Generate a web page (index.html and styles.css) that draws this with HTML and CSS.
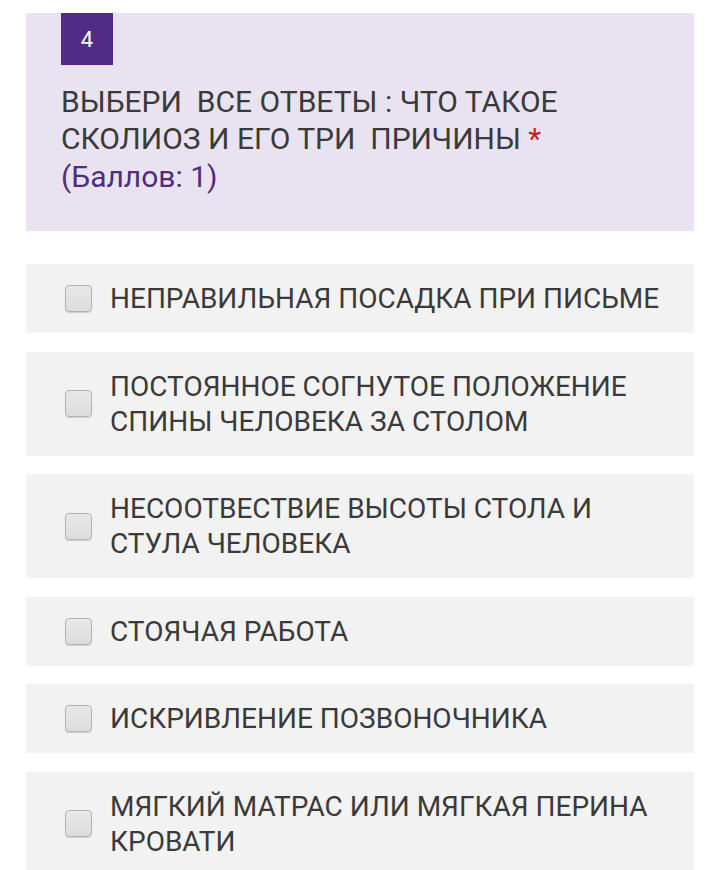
FILE: index.html
```html
<!DOCTYPE html>
<html lang="ru">
<head>
<meta charset="utf-8">
<link rel="stylesheet" href="styles.css">
</head>
<body>
<div class="page">
  <div class="question">
    <div class="badge">4</div>
    <div class="title">ВЫБЕРИ&nbsp; ВСЕ ОТВЕТЫ : ЧТО ТАКОЕ СКОЛИОЗ И ЕГО ТРИ&nbsp; ПРИЧИНЫ <span class="req">*</span></div>
    <div class="points">(Баллов: 1)</div>
  </div>
  <div class="options">
    <label class="option"><span class="box"></span><span class="text">НЕПРАВИЛЬНАЯ ПОСАДКА ПРИ ПИСЬМЕ</span></label>
    <label class="option"><span class="box"></span><span class="text">ПОСТОЯННОЕ СОГНУТОЕ ПОЛОЖЕНИЕ СПИНЫ ЧЕЛОВЕКА ЗА СТОЛОМ</span></label>
    <label class="option"><span class="box"></span><span class="text">НЕСООТВЕСТВИЕ ВЫСОТЫ СТОЛА И СТУЛА ЧЕЛОВЕКА</span></label>
    <label class="option"><span class="box"></span><span class="text">СТОЯЧАЯ РАБОТА</span></label>
    <label class="option"><span class="box"></span><span class="text">ИСКРИВЛЕНИЕ ПОЗВОНОЧНИКА</span></label>
    <label class="option"><span class="box"></span><span class="text">МЯГКИЙ МАТРАС ИЛИ МЯГКАЯ ПЕРИНА КРОВАТИ</span></label>
  </div>
</div>
</body>
</html>
```
FILE: styles.css
```css
html, body {
  margin: 0;
  padding: 0;
  background: #ffffff;
}
body {
  font-family: Roboto, "Noto Sans", sans-serif;
  color: #3a3a3a;
}
.page {
  padding: 13px 14px 0 26px;
}
.question {
  background: #e9e3f1;
  padding: 0 35px 20px 35px;
  height: 218px;
  box-sizing: border-box;
}
.badge {
  width: 52px;
  height: 52px;
  background: #522b86;
  color: #ffffff;
  font-size: 22px;
  display: flex;
  align-items: center;
  justify-content: center;
}
.title {
  margin-top: 18px;
  font-size: 30px;
  line-height: 37px;
  color: #3a3a3a;
  width: 540px;
}
.req {
  color: #c5221f;
}
.points {
  font-size: 30px;
  line-height: 40px;
  color: #4f2c7f;
}
.options {
  margin-top: 33px;
  display: flex;
  flex-direction: column;
  gap: 18.5px;
}
.option {
  background: #f2f2f2;
  display: flex;
  align-items: center;
  gap: 18px;
  padding: 17px 24px 17px 39px;
  min-height: 69px;
  box-sizing: border-box;
}
.box {
  flex: none;
  width: 27px;
  height: 27px;
  box-sizing: border-box;
  border: 1.5px solid #b3b3b3;
  border-radius: 4px;
  background: linear-gradient(#e8e8e8, #dcdcdc);
  box-shadow: 0 1px 1px rgba(0,0,0,0.15);
}
.text {
  font-size: 28px;
  line-height: 35px;
  color: #3a3a3a;
}
```
